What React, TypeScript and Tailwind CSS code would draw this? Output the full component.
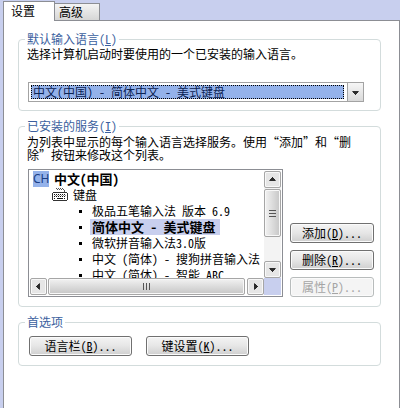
import React, { useState } from 'react';

const LAYOUTS = ['极品五笔输入法 版本 6.9', '简体中文 - 美式键盘', '微软拼音输入法3.0版', '中文 (简体) - 搜狗拼音输入法', '中文 (简体) - 智能 ABC'];

type ButtonProps = {
  label: string;
  hotkey: string;
  disabled?: boolean;
  wide?: boolean;
};

const PushButton: React.FC<ButtonProps> = ({ label, hotkey, disabled, wide }) => (
  <button
    type="button"
    disabled={disabled}
    className={`h-5 shrink-0 rounded-[3px] border border-[#707070] bg-linear-to-b from-[#f4f4f4] from-0% via-[#e6e6e6] via-50% to-[#cfcfcf] to-100% text-center leading-4 whitespace-nowrap text-black shadow-[inset_0_0_0_1px_#fbfbfb] disabled:border-[#b8bcbc] disabled:bg-[#f4f4f4] disabled:bg-none disabled:text-[#a5a5a5] ${
      wide ? 'w-[103px]' : 'w-[84px]'
    }`}
  >
    {label}(<u>{hotkey}</u>)...
  </button>
);

const Group: React.FC<{ title: string; hotkey?: string; className: string; children: React.ReactNode }> = ({
  title,
  hotkey,
  className,
  children,
}) => (
  <fieldset className="min-w-0 rounded border border-[#d3dcdc]">
    <legend className="ml-1.5 px-0.5 leading-3 text-[#3b5f9e]">
      {title}
      {hotkey && (
        <>
          (<u>{hotkey}</u>)
        </>
      )}
    </legend>
    <div className={className}>{children}</div>
  </fieldset>
);

const Arrow: React.FC<{ className?: string }> = ({ className = '' }) => (
  <svg viewBox="0 0 7 7" className={`size-[7px] ${className}`} shapeRendering="crispEdges" aria-hidden="true">
    <path d="M0 2h7v1H0z" fill="#6a6a6a" />
    <path d="M1 2h5v2H1zM2 4h3v1H2zM3 5h1v1H3z" fill="#2b2b2b" />
  </svg>
);

const scrollPart =
  'flex items-center justify-center rounded-[2px] border border-[#a6a6a6] shadow-[inset_0_0_0_1px_#f8f8f8]';

const KeyboardIcon = () => (
  <svg viewBox="0 0 16 14" className="h-3.5 w-4" shapeRendering="crispEdges" aria-hidden="true">
    <path
      d="M4 0h1v1H4zM5 1h1v1H5zM6 0h1v1H6zM7 1h1v1H7zM8 0h1v1H8zM9 1h1v1H9zM10 0h1v1h-1zM11 1h1v1h-1zM12 2h1v2h-1z"
      fill="#555"
    />
    <path d="M1 4h14v1H1zM0 5h1v7H0zM15 5h1v7h-1zM1 12h14v1H1z" fill="#333" />
    <path d="M2 6.5h12M2 8.5h12M2 10.5h2M12 10.5h2" stroke="#111" strokeDasharray="1 1" />
    <path d="M3 7.5h11" stroke="#888" strokeDasharray="1 1" />
    <path d="M5 10.5h6" stroke="#111" />
  </svg>
);

export default function App() {
  const [tab, setTab] = useState('设置');
  const [selected, setSelected] = useState(LAYOUTS[1]);

  return (
    <div className="flex min-h-screen flex-col bg-[#c8cfee] pl-[3px] font-['Noto_Sans_CJK_SC',sans-serif] text-[12px] leading-3 text-black [font-feature-settings:'hwid']">
      {/* Tabs */}
      <div role="tablist" className="flex h-5 items-end">
        {['设置', '高级'].map(name => (
          <button
            key={name}
            type="button"
            role="tab"
            aria-selected={tab === name}
            onClick={() => setTab(name)}
            className={
              tab === name
                ? 'z-10 -mb-px h-5 w-[52px] border border-b-0 border-[#8c8e94] bg-white pr-3 pb-0.5 leading-4'
                : 'h-[17px] w-[45px] border border-b-0 border-l-0 border-[#8c8e94] bg-linear-to-b from-[#f4f4f4] to-[#d6d6d6] pr-3 leading-4'
            }
          >
            {name}
          </button>
        ))}
      </div>

      {/* Page */}
      <main className="flex grow flex-col gap-[9px] border border-b-0 border-[#8c8e94] bg-white pt-3 pr-[18px] pl-3.5">
        <Group title="默认输入语言" hotkey="L" className="pr-4 pb-2 pl-2">
          <label htmlFor="default-language" className="block pt-[3px]">
            选择计算机启动时要使用的一个已安装的输入语言。
          </label>
          <div className="mt-[22px] ml-px flex h-5 border border-[#a3a3a3] bg-white">
            <div className="grow p-0.5">
              <select
                id="default-language"
                className="block h-3.5 w-full appearance-none border border-dotted border-black bg-[#94b2ea] pl-px text-[12px] leading-3 text-[#0b2353] outline-none"
              >
                <option>中文(中国) - 简体中文 - 美式键盘</option>
              </select>
            </div>
            <span className="ml-px flex w-4 items-center justify-center border-l border-[#a3a3a3] bg-linear-to-b from-[#f6f6f6] to-[#d9d9d9]">
              <Arrow />
            </span>
          </div>
        </Group>

        <Group title="已安装的服务" hotkey="I" className="pr-1.5 pb-[9px] pl-2">
          <p className="pt-[3px] leading-[13px]">
            为列表中显示的每个输入语言选择服务。使用“添加”和“删
            <br />
            除”按钮来修改这个列表。
          </p>
          <div className="mt-2 ml-px flex items-end gap-[7px]">
            {/* Service list */}
            <div className="min-w-0 grow border border-[#8c8e94] bg-white p-px">
              <div className="flex h-[107px]">
                <div className="min-w-0 grow overflow-hidden pl-[3px] leading-4 whitespace-nowrap">
                  <div className="flex items-center gap-[5px] text-[13px] font-bold">
                    <span className="w-4 bg-[#94b2ea] text-center font-['Noto_Sans'] text-[12px] font-normal text-[#1b3f85] [font-feature-settings:normal]">
                      CH
                    </span>
                    中文(中国)
                  </div>
                  <div className="flex items-center gap-[5px] pl-[19px]">
                    <KeyboardIcon />
                    键盘
                  </div>
                  <ul role="listbox" aria-label="键盘" className="pl-[46px]">
                    {LAYOUTS.map(item => (
                      <li
                        key={item}
                        role="option"
                        aria-selected={item === selected}
                        onClick={() => setSelected(item)}
                        className="flex h-4 items-center gap-2"
                      >
                        <span className="size-[3px] shrink-0 bg-black" />
                        <span
                          className={
                            item === selected ? 'bg-[#c8cfee] pr-1 pl-0.5 text-[13px] font-bold' : 'pl-0.5'
                          }
                        >
                          {item}
                        </span>
                      </li>
                    ))}
                  </ul>
                </div>
                <div className="flex w-[17px] shrink-0 flex-col gap-px bg-[#f3f3f3]">
                  <span className={`h-[17px] bg-[#e6e6e6] ${scrollPart}`}>
                    <Arrow className="rotate-180" />
                  </span>
                  <span className={`h-12 flex-col gap-0.5 bg-linear-to-r from-[#f2f2f2] to-[#c6c6c6] ${scrollPart}`}>
                    <i className="h-px w-[7px] bg-[#555]" />
                    <i className="h-px w-[7px] bg-[#555]" />
                    <i className="h-px w-[7px] bg-[#555]" />
                  </span>
                  <span className={`mt-auto h-[17px] bg-[#e6e6e6] ${scrollPart}`}>
                    <Arrow />
                  </span>
                </div>
              </div>
              <div className="flex h-[17px]">
                <span className={`mr-px w-[17px] bg-[#e6e6e6] ${scrollPart}`}>
                  <Arrow className="rotate-90" />
                </span>
                <span className={`mr-0.5 grow gap-0.5 bg-linear-to-b from-[#f2f2f2] to-[#c6c6c6] ${scrollPart}`}>
                  <i className="h-[7px] w-px bg-[#555]" />
                  <i className="h-[7px] w-px bg-[#555]" />
                  <i className="h-[7px] w-px bg-[#555]" />
                </span>
                <span className={`w-[17px] bg-[#e6e6e6] ${scrollPart}`}>
                  <Arrow className="-rotate-90" />
                </span>
                <span className="w-[17px] bg-[#c8cfee]" />
              </div>
            </div>
            <div className="flex flex-col gap-[7px]">
              <PushButton label="添加" hotkey="D" />
              <PushButton label="删除" hotkey="R" />
              <PushButton label="属性" hotkey="P" disabled />
            </div>
          </div>
        </Group>

        <Group title="首选项" className="px-2.5 pb-[9px]">
          <div className="flex gap-3.5 pt-2">
            <PushButton label="语言栏" hotkey="B" wide />
            <PushButton label="键设置" hotkey="K" wide />
          </div>
        </Group>
      </main>
    </div>
  );
}
